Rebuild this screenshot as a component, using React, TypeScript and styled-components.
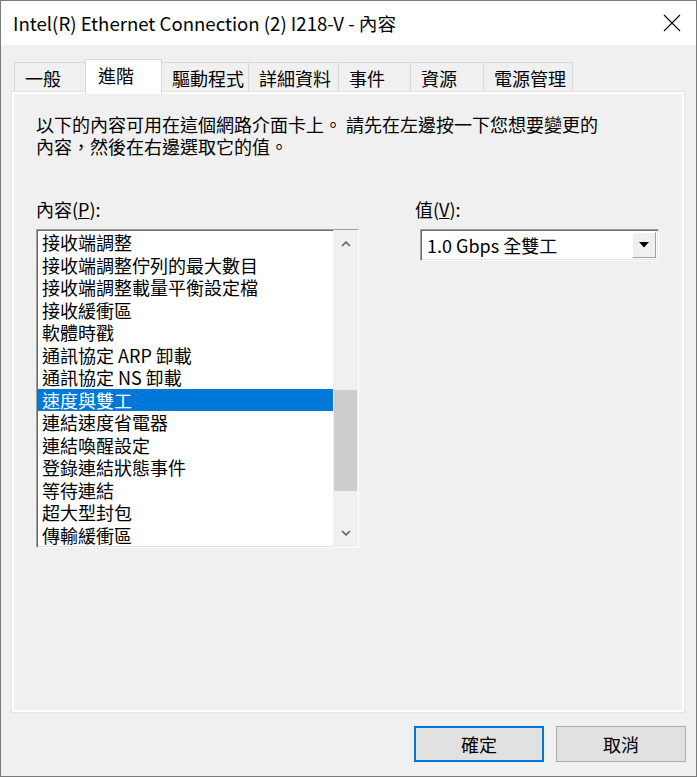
import { FC } from "react";
import styled, { createGlobalStyle } from "styled-components";

const GlobalStyle = createGlobalStyle`
  html, body {
    margin: 0;
    padding: 0;
    background: #f0f0f0;
  }
  * {
    box-sizing: border-box;
  }
`;

// widths include the 1px that overlaps the neighbour's border
const tabs = [
  { label: "一般", width: 72 },
  { label: "進階", width: 77, active: true },
  { label: "驅動程式", width: 88 },
  { label: "詳細資料", width: 91 },
  { label: "事件", width: 73 },
  { label: "資源", width: 74 },
  { label: "電源管理", width: 90 },
];

const properties = [
  "接收端調整",
  "接收端調整佇列的最大數目",
  "接收端調整載量平衡設定檔",
  "接收緩衝區",
  "軟體時戳",
  "通訊協定 ARP 卸載",
  "通訊協定 NS 卸載",
  "速度與雙工",
  "連結速度省電器",
  "連結喚醒設定",
  "登錄連結狀態事件",
  "等待連結",
  "超大型封包",
  "傳輸緩衝區",
];

const SELECTED = 7;

const App: FC = () => {
  return (
    <>
      <GlobalStyle />
      <SWindow>
        <STitleBar>
          <STitle>Intel(R) Ethernet Connection (2) I218-V - 內容</STitle>
          <SCloseButton aria-label="close">
            <svg width="18" height="18" viewBox="0 0 18 18">
              <path d="M1 1 L17 17 M17 1 L1 17" stroke="#000" strokeWidth="1.1" fill="none" />
            </svg>
          </SCloseButton>
        </STitleBar>

        <SBody>
          <STabRow>
            {tabs.map((t) => (
              <STab key={t.label} $width={t.width} $active={!!t.active}>
                {t.label}
              </STab>
            ))}
          </STabRow>

          <SPanel>
            <SDescription>
              以下的內容可用在這個網路介面卡上。 請先在左邊按一下您想要變更的
              <br />
              內容，然後在右邊選取它的值。
            </SDescription>

            <SColumns>
              <div>
                <SLabel>
                  內容(<u>P</u>):
                </SLabel>
                <SListBox>
                  <SItems>
                    {properties.map((p, i) => (
                      <SItem key={p} $selected={i === SELECTED}>
                        {p}
                      </SItem>
                    ))}
                  </SItems>
                  <SScrollBar>
                    <SScrollArrow>
                      <svg width="10" height="6" viewBox="0 0 10 6">
                        <polyline points="1,5 5,1.2 9,5" stroke="#606060" strokeWidth="1.6" fill="none" />
                      </svg>
                    </SScrollArrow>
                    <STrack>
                      <SThumb $top={132} $height={101} />
                    </STrack>
                    <SScrollArrow>
                      <svg width="10" height="6" viewBox="0 0 10 6">
                        <polyline points="1,1 5,4.8 9,1" stroke="#606060" strokeWidth="1.6" fill="none" />
                      </svg>
                    </SScrollArrow>
                  </SScrollBar>
                </SListBox>
              </div>

              <div>
                <SLabel>
                  值(<u>V</u>):
                </SLabel>
                <SCombo>
                  <SComboText>1.0 Gbps 全雙工</SComboText>
                  <SDropButton>
                    <svg width="10" height="6" viewBox="0 0 10 6">
                      <polygon points="0,0 10,0 5,5.5" fill="#000" />
                    </svg>
                  </SDropButton>
                </SCombo>
              </div>
            </SColumns>
          </SPanel>

          <SFooter>
            <SButton $primary>確定</SButton>
            <SButton>取消</SButton>
          </SFooter>
        </SBody>
      </SWindow>
    </>
  );
};

export default App;

const SWindow = styled.div`
  width: 697px;
  height: 777px;
  border: 1px solid #7a7a7a;
  background: #f0f0f0;
  display: flex;
  flex-direction: column;
  font-family: "Noto Sans CJK TC", "Noto Sans", sans-serif;
  font-size: 18px;
  color: #000;
`;

const STitleBar = styled.div`
  height: 44px;
  background: #fff;
  display: flex;
  align-items: center;
  justify-content: space-between;
  padding: 0 15px 0 12px;
`;

const STitle = styled.div`
  font-size: 18.6px;
  line-height: 22px;
`;

const SCloseButton = styled.div`
  width: 18px;
  height: 18px;
  display: flex;
`;

const SBody = styled.div`
  flex: 1;
  display: flex;
  flex-direction: column;
  padding: 14px 11px 0 11px;
`;

const STabRow = styled.div`
  display: flex;
  align-items: flex-end;
  padding-left: 3px;
  height: 33px;
`;

const STab = styled.div<{ $width: number; $active: boolean }>`
  width: ${(p) => p.$width}px;
  height: ${(p) => (p.$active ? 35 : 30)}px;
  margin-bottom: ${(p) => (p.$active ? -2 : 0)}px;
  margin-left: -1px;
  padding-left: ${(p) => (p.$active ? 12 : 10)}px;
  padding-top: 4px;
  line-height: 22px;
  background: ${(p) => (p.$active ? "#fff" : "#f0f0f0")};
  border: 1px solid #d9d9d9;
  border-bottom: none;
  position: relative;
  z-index: ${(p) => (p.$active ? 2 : 1)};
  white-space: nowrap;
`;

const SPanel = styled.div`
  width: 672px;
  height: 620px;
  border: 2px solid #fff;
  box-shadow: 0 0 0 1px #e3e3e3;
  background: #f0f0f0;
  padding: 19px 22px 0 22px;
  position: relative;
  z-index: 1;
`;

const SDescription = styled.div`
  line-height: 22px;
`;

const SColumns = styled.div`
  display: grid;
  grid-template-columns: 323px 1fr;
  column-gap: 56px;
  margin-top: 41px;
`;

const SLabel = styled.div`
  line-height: 22px;
  margin-bottom: 9px;
`;

const SListBox = styled.div`
  width: 323px;
  height: 319px;
  display: flex;
  background: #fff;
  border: 1px solid;
  border-color: #a0a0a0 #fff #fff #a0a0a0;
  box-shadow: inset 1px 1px 0 #696969, inset -1px -1px 0 #e3e3e3;
`;

const SItems = styled.div`
  width: 296px;
  padding-top: 1px;
  display: flex;
  flex-direction: column;
`;

const SItem = styled.div<{ $selected: boolean }>`
  height: 22.5px;
  line-height: 22.5px;
  padding-left: 5px;
  white-space: nowrap;
  background: ${(p) => (p.$selected ? "#0078d7" : "transparent")};
  color: ${(p) => (p.$selected ? "#fff" : "#000")};
`;

const SScrollBar = styled.div`
  width: 25px;
  background: #f0f0f0;
  display: grid;
  grid-template-rows: 28px 1fr 28px;
`;

const SScrollArrow = styled.div`
  display: flex;
  align-items: center;
  justify-content: center;
`;

const STrack = styled.div`
  display: flex;
  flex-direction: column;
  padding: 0 1px;
`;

const SThumb = styled.div<{ $top: number; $height: number }>`
  margin-top: ${(p) => p.$top}px;
  height: ${(p) => p.$height}px;
  background: #cdcdcd;
`;

const SCombo = styled.div`
  margin-left: 5px;
  width: 239px;
  height: 32px;
  display: flex;
  align-items: stretch;
  background: #fff;
  border: 1px solid;
  border-color: #a0a0a0 #fff #fff #a0a0a0;
  box-shadow: inset 1px 1px 0 #696969, inset -1px -1px 0 #e3e3e3;
  padding: 2px 2px 2px 6px;
`;

const SComboText = styled.div`
  flex: 1;
  line-height: 26px;
  white-space: nowrap;
`;

const SDropButton = styled.div`
  width: 24px;
  background: #f0f0f0;
  border: 1px solid;
  border-color: #fff #a0a0a0 #a0a0a0 #fff;
  display: flex;
  align-items: center;
  justify-content: center;
`;

const SFooter = styled.div`
  display: flex;
  justify-content: flex-end;
  gap: 12px;
  padding-top: 14px;
  margin-right: -1px;
`;

const SButton = styled.div<{ $primary?: boolean }>`
  width: 130px;
  height: 36px;
  display: flex;
  align-items: center;
  justify-content: center;
  background: #e1e1e1;
  border: ${(p) => (p.$primary ? "2px solid #0078d7" : "1px solid #adadad")};
`;
